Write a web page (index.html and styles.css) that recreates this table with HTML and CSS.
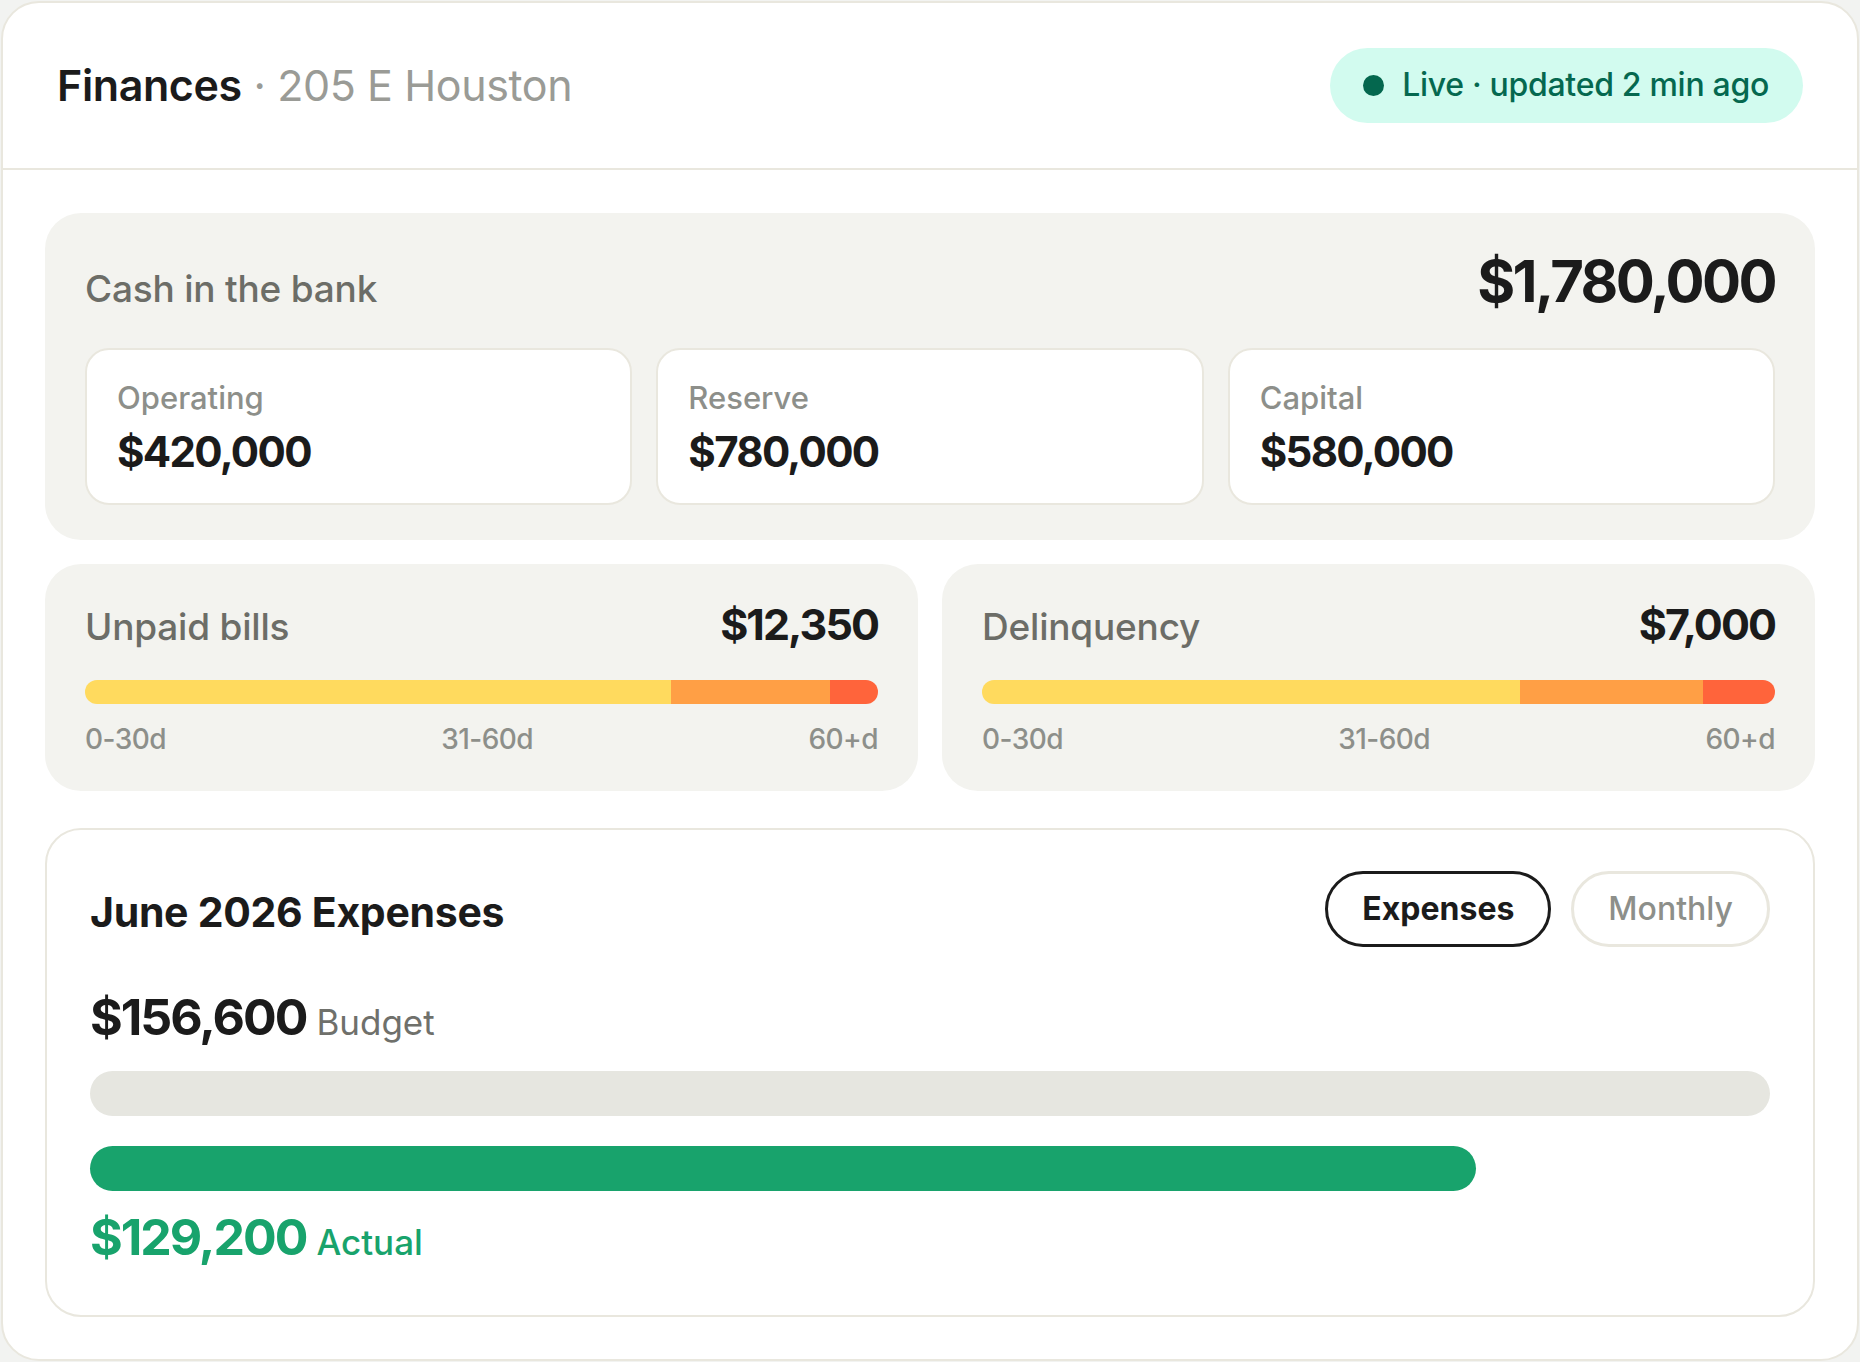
FILE: index.html
```html
<!DOCTYPE html>
<html lang="en">
<head>
<meta charset="utf-8">
<title>Finances · 205 E Houston</title>
<link rel="stylesheet" href="styles.css">
</head>
<body>
<div class="card">
  <header class="card-head">
    <h1 class="title">Finances<span class="sub"> · 205 E Houston</span></h1>
    <div class="badge"><span class="dot"></span>Live · updated 2 min ago</div>
  </header>
  <main class="card-body">
    <section class="panel cash">
      <div class="row-head">
        <div class="label">Cash in the bank</div>
        <div class="big">$1,780,000</div>
      </div>
      <div class="accounts">
        <div class="acct"><div class="acct-label">Operating</div><div class="acct-value">$420,000</div></div>
        <div class="acct"><div class="acct-label">Reserve</div><div class="acct-value">$780,000</div></div>
        <div class="acct"><div class="acct-label">Capital</div><div class="acct-value">$580,000</div></div>
      </div>
    </section>
    <div class="aging-row">
      <section class="panel aging">
        <div class="row-head">
          <div class="label">Unpaid bills</div>
          <div class="mid">$12,350</div>
        </div>
        <div class="stack">
          <span class="seg s1" style="width:73.9%"></span><span class="seg s2" style="width:20%"></span><span class="seg s3" style="width:6.1%"></span>
        </div>
        <div class="ticks"><span>0-30d</span><span>31-60d</span><span>60+d</span></div>
      </section>
      <section class="panel aging">
        <div class="row-head">
          <div class="label">Delinquency</div>
          <div class="mid">$7,000</div>
        </div>
        <div class="stack">
          <span class="seg s1" style="width:67.8%"></span><span class="seg s2" style="width:23.1%"></span><span class="seg s3" style="width:9.1%"></span>
        </div>
        <div class="ticks"><span>0-30d</span><span>31-60d</span><span>60+d</span></div>
      </section>
    </div>
    <section class="expenses">
      <div class="exp-head">
        <h2 class="exp-title">June 2026 Expenses</h2>
        <div class="toggle">
          <button class="pill active">Expenses</button>
          <button class="pill">Monthly</button>
        </div>
      </div>
      <div class="amount budget"><span class="amt">$156,600</span><span class="amt-label">Budget</span></div>
      <div class="track"></div>
      <div class="track actual" style="width:82.5%"></div>
      <div class="amount green"><span class="amt">$129,200</span><span class="amt-label">Actual</span></div>
    </section>
  </main>
</div>
</body>
</html>
```

FILE: styles.css
```css
* { box-sizing: border-box; }
html, body { margin: 0; padding: 0; }
body {
  background: #f2f3f1;
  font-family: Inter, "Noto Sans", "Liberation Sans", sans-serif;
  color: #1b1b1b;
  line-height: 1.2;
}
.card {
  margin: 1px;
  background: #ffffff;
  border: 2px solid #e9e7de;
  border-radius: 38px;
}
.card-head {
  height: 167px;
  padding: 0 54px 0 54px;
  display: flex;
  align-items: center;
  justify-content: space-between;
  border-bottom: 2px solid #e9e7de;
}
.title {
  margin: 0;
  font-size: 43px;
  font-weight: 600;
  letter-spacing: -0.4px;
  color: #1b1b1b;
}
.title .sub {
  font-weight: 400;
  color: #9a9b96;
}
.badge {
  display: flex;
  align-items: center;
  gap: 18px;
  height: 75px;
  padding: 0 34px 0 33px;
  border-radius: 40px;
  background: #d2fbef;
  color: #05684f;
  font-size: 32px;
  font-weight: 500;
  letter-spacing: -0.3px;
}
.badge .dot {
  width: 21px;
  height: 21px;
  border-radius: 50%;
  background: #04674e;
}
.card-body {
  padding: 43px 42px 42px 42px;
  display: flex;
  flex-direction: column;
}
.panel {
  background: #f3f3ef;
  border-radius: 36px;
  padding: 0 40px;
}
.row-head {
  display: flex;
  justify-content: space-between;
  align-items: baseline;
}
.label {
  font-size: 37px;
  font-weight: 500;
  color: #6c6d67;
  letter-spacing: -0.2px;
}
.cash { padding-top: 34px; padding-bottom: 35px; }
.big {
  font-size: 58px;
  font-weight: 700;
  letter-spacing: -0.045em;
}
.accounts {
  margin-top: 31px;
  display: grid;
  grid-template-columns: repeat(3, 1fr);
  gap: 24px;
}
.acct {
  background: #ffffff;
  border: 2px solid #e9e7de;
  border-radius: 24px;
  padding: 29px 30px 26px 30px;
}
.acct-label {
  font-size: 31px;
  font-weight: 500;
  color: #8d8f8a;
}
.acct-value {
  margin-top: 11px;
  font-size: 42px;
  font-weight: 700;
  letter-spacing: -0.04em;
}
.aging-row {
  margin-top: 24px;
  display: grid;
  grid-template-columns: 1fr 1fr;
  gap: 24px;
}
.aging { padding-top: 35px; padding-bottom: 35px; }
.mid {
  font-size: 43px;
  font-weight: 700;
  letter-spacing: -0.045em;
}
.stack {
  margin-top: 29px;
  height: 24px;
  border-radius: 12px;
  overflow: hidden;
  display: flex;
}
.seg { display: block; height: 100%; }
.s1 { background: #ffda5e; }
.s2 { background: #ff9f45; }
.s3 { background: #ff643b; }
.ticks {
  margin-top: 19px;
  display: flex;
  justify-content: space-between;
  font-size: 28px;
  font-weight: 500;
  color: #8d8f8a;
  letter-spacing: -0.02em;
}
.expenses {
  margin-top: 37px;
  border: 2px solid #e9e7de;
  border-radius: 36px;
  background: #ffffff;
  padding: 41px 43px 48px 43px;
}
.exp-head {
  display: flex;
  justify-content: space-between;
  align-items: center;
}
.exp-title {
  margin: 0;
  font-size: 41px;
  font-weight: 700;
  letter-spacing: -0.3px;
  position: relative;
  top: 3px;
}
.toggle { display: flex; gap: 20px; }
.pill {
  font-family: inherit;
  height: 76px;
  padding: 0 34px;
  border-radius: 40px;
  border: 3px solid #e9e7de;
  background: #ffffff;
  color: #8d8f8a;
  font-size: 32px;
  font-weight: 500;
  line-height: 1.2;
}
.pill.active {
  border-color: #1b1b1b;
  color: #1b1b1b;
  font-weight: 700;
}
.amount {
  display: flex;
  align-items: baseline;
  gap: 10px;
}
.amount.budget { margin-top: 40px; }
.amt {
  font-size: 50px;
  font-weight: 700;
  letter-spacing: -0.04em;
}
.amt-label {
  font-size: 35px;
  font-weight: 400;
  color: #6f706b;
}
.track {
  margin-top: 24px;
  height: 45px;
  border-radius: 23px;
  background: #e6e6e0;
}
.track.actual {
  margin-top: 30px;
  background: #18a36c;
}
.amount.green { margin-top: 16px; color: #18a36c; }
.amount.green .amt-label { color: #18a36c; font-weight: 500; }
```
